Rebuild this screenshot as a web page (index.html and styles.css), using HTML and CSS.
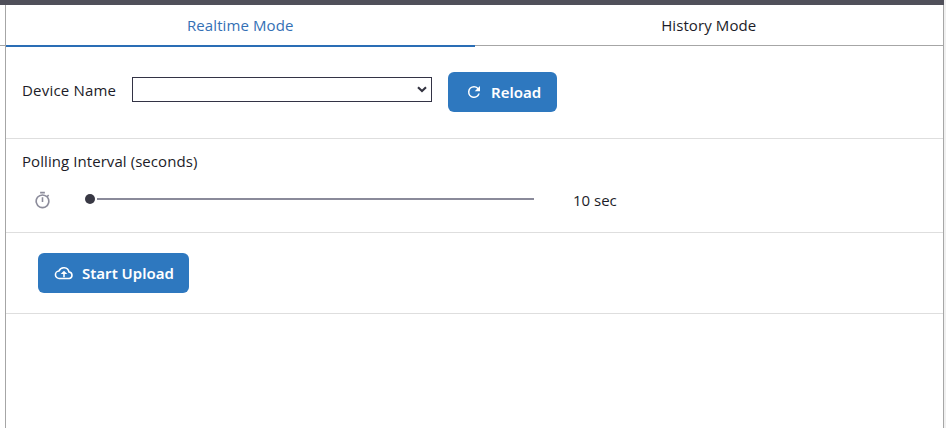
FILE: index.html
```html
<!DOCTYPE html>
<html lang="en">
<head>
<meta charset="utf-8">
<title>Upload</title>
<link rel="stylesheet" href="styles.css">
</head>
<body>
<div class="topbar"></div>
<div class="shell">
  <div class="gutter"></div>
  <main class="panel">
    <nav class="tabs">
      <a class="tab active">Realtime Mode</a>
      <a class="tab">History Mode</a>
    </nav>
    <section class="row device">
      <label class="label">Device Name</label>
      <div class="select">
        <svg width="10" height="7" viewBox="0 0 10 7"><path d="M1 1.200 5 5l4-3.800" fill="none" stroke="#333340" stroke-width="2.100"/></svg>
      </div>
      <button class="btn reload">
        <svg width="18" height="18" viewBox="0 0 24 24" fill="currentColor"><path d="M17.650 6.350A7.960 7.960 0 0 0 12 4a8 8 0 1 0 7.730 10h-2.080A6 6 0 1 1 12 6c1.660 0 3.140.690 4.220 1.780L13 11h7V4z"/></svg>
        <span>Reload</span>
      </button>
    </section>
    <section class="row polling">
      <div class="label">Polling Interval (seconds)</div>
      <div class="slider-row">
        <svg class="timer" width="19" height="19" viewBox="0 0 24 24" fill="currentColor"><path d="M15 1H9v2h6zm-4 13h2V8h-2zm8.030-6.610 1.420-1.420c-.430-.510-.900-.990-1.410-1.410l-1.420 1.420A8.960 8.960 0 0 0 12 4a9 9 0 1 0 7.030 3.390M12 20a7 7 0 1 1 0-14 7 7 0 0 1 0 14"/></svg>
        <div class="slider"><span class="thumb"></span><span class="track"></span></div>
        <span class="value">10 sec</span>
      </div>
    </section>
    <section class="row upload">
      <button class="btn start">
        <svg width="20" height="20" viewBox="0 0 24 24" fill="none" stroke="currentColor" stroke-width="1.900"><path d="M8.500 18.500H6.500a4.500 4.500 0 0 1-.5-9 6.300 6.300 0 0 1 12 1.300 3.900 3.900 0 0 1 .5 7.700H15.500M8.500 18.500h7"/><path d="M12 17v-5.500"/><path d="M8 13.200 12 9.200l4 4z" fill="currentColor" stroke="none"/></svg>
        <span>Start Upload</span>
      </button>
    </section>
  </main>
</div>
</body>
</html>
```
FILE: styles.css
```css
* { box-sizing: border-box; }
body {
  margin: 0;
  height: 428px;
  overflow: hidden;
  background: #f0f0f0;
  color: #1c1c28;
  font: 15px/24px "Open Sans", "Noto Sans", sans-serif;
}
.topbar { width: 944px; height: 5px; background: #50505a; }
.shell { display: flex; width: 944px; height: 423px; background: #fff; }
.gutter { width: 5px; height: 41px; border-bottom: 1px solid #a6a6a6; }
.panel { flex: 1; border: solid #a6a6a6; border-width: 0 1px; }
.tabs { display: flex; height: 42px; letter-spacing: 0.1px; }
.tab {
  flex: 1;
  height: 41px;
  padding-top: 8px;
  text-align: center;
  border-bottom: 1px solid #a6a6a6;
}
.tab.active { height: 42px; color: #3470b5; border-bottom: 2px solid #2a6db5; }
.row { border-bottom: 1px solid #dedede; padding-left: 16px; }
.label, .btn span, .value { white-space: nowrap; }
.device { display: flex; height: 92px; padding-top: 25px; }
.device .label { width: 110px; padding-top: 6px; letter-spacing: 0.2px; }
.select {
  display: flex;
  align-items: center;
  justify-content: flex-end;
  width: 300px;
  height: 25px;
  margin-top: 5px;
  padding-right: 4px;
  border: 1px solid #333345;
}
.btn {
  display: flex;
  align-items: center;
  height: 40px;
  padding: 0 0 0 17px;
  border: 0;
  border-radius: 6px;
  background: #2e78bf;
  color: #fff;
  font: 600 15px/24px "Noto Sans", "Open Sans", sans-serif;
}
.reload { width: 109px; margin-left: 16px; gap: 8px; }
.polling { height: 94px; padding-top: 10px; }
.polling .label { letter-spacing: 0.07px; }
.slider-row { display: flex; align-items: center; height: 24px; margin-top: 15px; padding-left: 10px; }
.timer { color: #8c8c9b; margin: 1px 0 0 1px; }
.slider { display: flex; align-items: center; gap: 2px; width: 449px; margin: -2px 0 0 33px; }
.thumb { width: 10px; height: 10px; border-radius: 50%; background: #383844; }
.track { flex: 1; height: 2px; background: #8a8a9a; }
.value { margin-left: 39px; }
.upload { height: 81px; padding: 20px 0 0 32px; }
.start { width: 151px; padding-left: 16px; gap: 8px; }
```
